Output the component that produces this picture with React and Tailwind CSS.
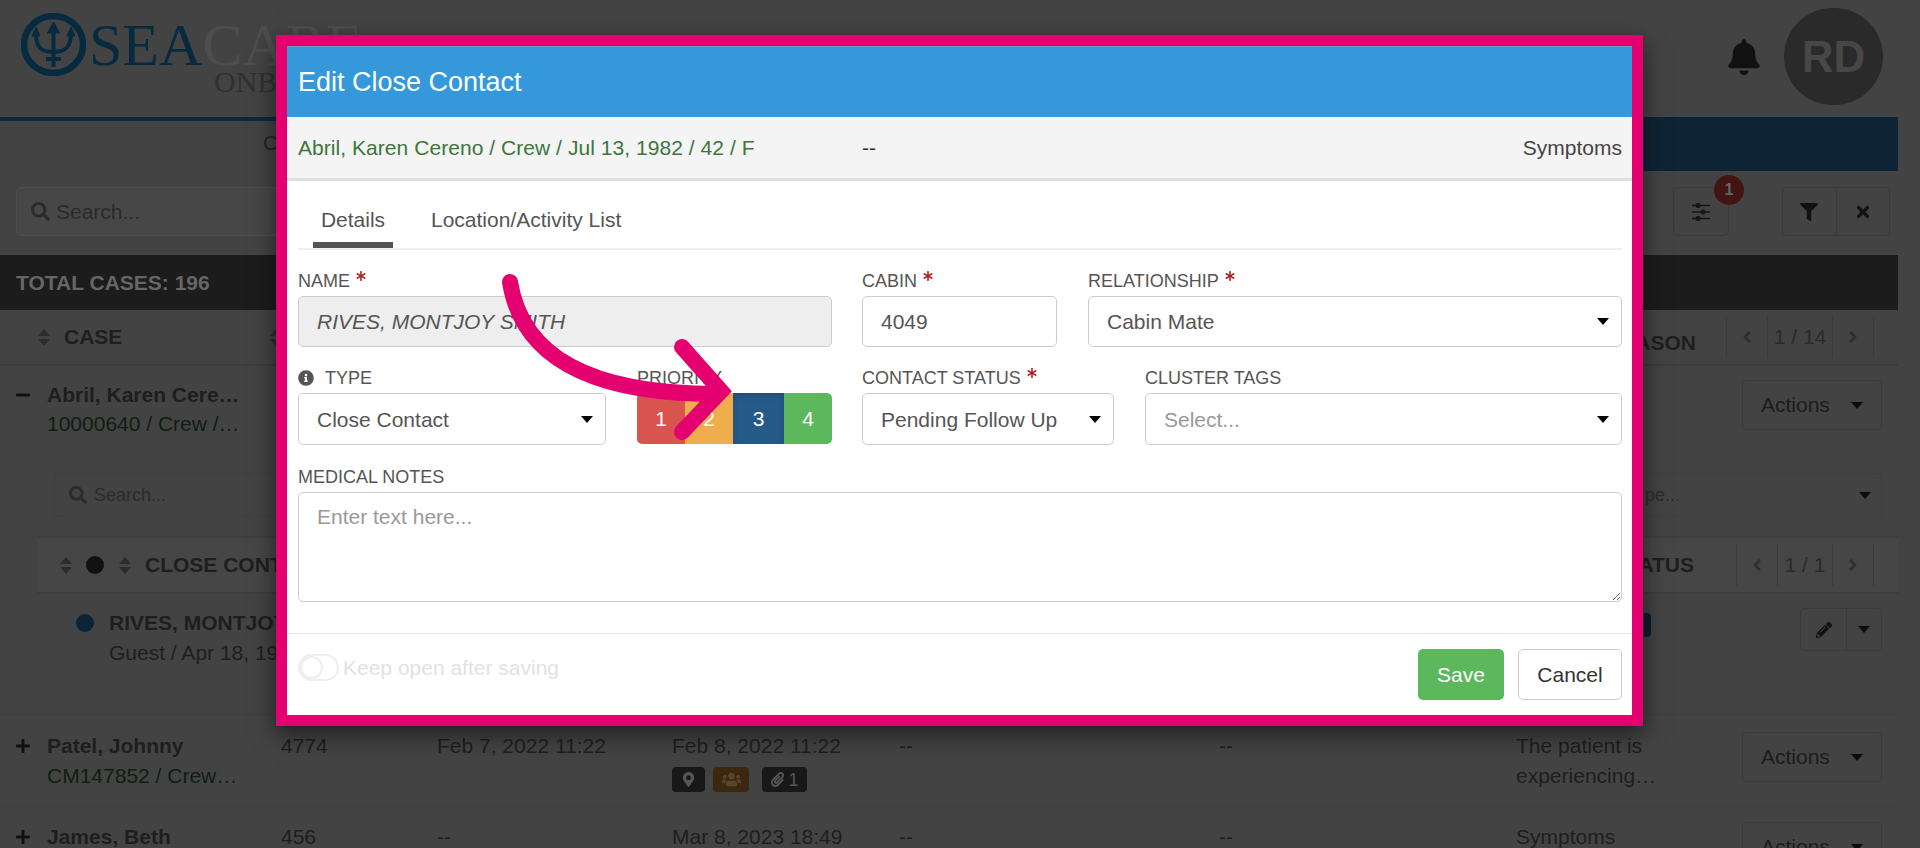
import {
  FaAngleLeft,
  FaAngleRight,
  FaAsterisk,
  FaBell,
  FaFilter,
  FaInfoCircle,
  FaMapMarkerAlt,
  FaMinus,
  FaPaperclip,
  FaPencilAlt,
  FaPlus,
  FaSearch,
  FaTimes,
  FaUsers,
} from "react-icons/fa";

const Caret = ({ dim }) => (
  <span
    className={`h-0 w-0 border-x-[6px] border-t-[7px] border-x-transparent ${
      dim ? "border-t-[#0c0c0c]" : "border-t-black"
    }`}
  />
);

const SortIcon = () => (
  <span className="flex w-3 flex-col gap-[3px]">
    <span className="h-0 w-0 border-x-[6px] border-b-[7px] border-x-transparent border-b-[#2c2c2c]" />
    <span className="h-0 w-0 border-x-[6px] border-t-[7px] border-x-transparent border-t-[#2c2c2c]" />
  </span>
);

const Logo = () => (
  <svg width="65" height="63" viewBox="0 0 65 63" fill="none" stroke="#062a40">
    <ellipse cx="32.5" cy="31.5" rx="29.5" ry="28.5" strokeWidth="6.500" />
    <path d="M32.500 12v42M25 46h15" strokeWidth="4" />
    <path d="M32.500 9l-6 11h12z" fill="#062a40" strokeWidth="1" />
    <path d="M15 21c0 13 5 18 17 18s18-5 18-18" strokeWidth="4" />
    <path d="M15 14l-4 9h8zM50 14l-4 9h8z" fill="#062a40" strokeWidth="1" />
  </svg>
);

const Sliders = () => (
  <svg width="20" height="20" viewBox="0 0 20 20" stroke="#161616" fill="#161616">
    <path d="M1 3.5h18M1 10h18M1 16.500h18" strokeWidth="1.400" />
    <circle cx="7" cy="3.500" r="2.200" />
    <circle cx="12" cy="10" r="2.200" />
    <circle cx="7" cy="16.500" r="2.200" />
  </svg>
);

const Pager = ({ label, mid }) => (
  <div className={`flex h-[42px] items-center text-[21px] text-[#2a2a2a]`}>
    <span className="flex h-full w-[42px] items-center justify-center border-x border-[#3b3b3b] text-[#2e2e2e]">
      <FaAngleLeft size={18} />
    </span>
    <span className={`flex h-full items-center justify-center ${mid}`}>{label}</span>
    <span className="flex h-full w-[42px] items-center justify-center border-x border-[#3b3b3b] text-[#2e2e2e]">
      <FaAngleRight size={18} />
    </span>
  </div>
);

const ActionsButton = () => (
  <div className="flex h-[50px] w-[140px] items-center justify-between rounded-[5px] border border-[#3a3a3a] pl-[18px] pr-[18px] text-[21px] text-[#1c1c1c]">
    Actions
    <Caret dim />
  </div>
);

const Required = () => <FaAsterisk size={10} className="ml-[6px] mt-[2px] text-[#b01e1e]" />;

const Field = ({ label, required, icon, className, children }) => (
  <div className={className}>
    <div className="mb-[3px] flex h-[25px] items-start pt-[1px] text-[18px] leading-[24px] text-[#555]">
      {icon}
      {label}
      {required && <Required />}
    </div>
    {children}
  </div>
);

const SelectBox = ({ value, placeholder, tall }) => (
  <div
    className={`flex items-center justify-between rounded-[5px] border border-[#ccc] bg-white pl-[18px] pr-[12px] text-[21px] ${
      tall ? "h-[52px] pt-[1px]" : "h-[51px]"
    }`}
  >
    <span className={placeholder ? "text-[#999]" : "text-[#555]"}>{value}</span>
    <Caret />
  </div>
);

const priorities = [
  { n: 1, cls: "w-[48px] rounded-l-[5px] bg-[#d9534f]" },
  { n: 2, cls: "w-[48px] bg-[#f0ad4e]" },
  { n: 3, cls: "w-[51px] bg-[#265a88] shadow-[inset_0_3px_6px_rgba(0,0,0,0.15)]" },
  { n: 4, cls: "w-[48px] rounded-r-[5px] bg-[#5cb85c]" },
];

const EditCloseContact = () => (
  <div className="absolute left-[276px] top-[35px] w-[1367px] border-[11px] border-[#e4006e] bg-white shadow-[0_8px_22px_rgba(0,0,0,0.55)]">
    <div className="flex h-[71px] items-center border-t border-[#6f9fc0] bg-[#3498db] pl-[11px] text-[27px] text-white">
      Edit Close Contact
    </div>
    <div className="flex h-[64px] items-center border-b-[3px] border-[#ddd] bg-[#f4f4f4] pl-[11px] pr-[10px] text-[21px]">
      <span className="w-[564px] tracking-[0.05px] text-[#3c763d]">Abril, Karen Cereno / Crew / Jul 13, 1982 / 42 / F</span>
      <span className="text-[#333]">--</span>
      <span className="ml-auto text-[#444]">Symptoms</span>
    </div>

    <div className="pl-[11px] pr-[10px]">
      <div className="flex h-[69px] border-b-2 border-[#eee] pl-[15px] text-[21px] text-[#555]">
        <div className="w-[80px] border-b-[6px] border-[#555] pt-[24px] text-center leading-[30px]">Details</div>
        <div className="ml-[38px] pt-[24px] leading-[30px]">Location/Activity List</div>
      </div>

      <div className="flex pt-[18px]">
        <Field label="NAME" required className="w-[534px]">
          <input
            readOnly
            value="RIVES, MONTJOY SMITH"
            className="h-[51px] w-full rounded-[5px] border border-[#ccc] bg-[#eee] px-[18px] text-[21px] italic text-[#555] outline-none"
          />
        </Field>
        <Field label="CABIN" required className="ml-[30px] w-[195px]">
          <input
            readOnly
            value="4049"
            className="h-[51px] w-full rounded-[5px] border border-[#ccc] bg-white px-[18px] text-[21px] text-[#555] outline-none"
          />
        </Field>
        <Field label="RELATIONSHIP" required className="ml-[31px] w-[534px]">
          <SelectBox value="Cabin Mate" />
        </Field>
      </div>

      <div className="mt-[18px] flex">
        <Field
          label="TYPE"
          icon={<FaInfoCircle size={16} className="mr-[11px] mt-[4px] text-[#555]" />}
          className="w-[308px]"
        >
          <SelectBox value="Close Contact" tall />
        </Field>
        <Field label="PRIORITY" className="ml-[31px] w-[195px]">
          <div className="flex h-[51px] text-[21px] text-white">
            {priorities.map((p) => (
              <span key={p.n} className={`flex items-center justify-center ${p.cls}`}>
                {p.n}
              </span>
            ))}
          </div>
        </Field>
        <Field label="CONTACT STATUS" required className="ml-[30px] w-[252px]">
          <SelectBox value="Pending Follow Up" tall />
        </Field>
        <Field label="CLUSTER TAGS" className="ml-[31px] w-[477px]">
          <SelectBox value="Select..." placeholder tall />
        </Field>
      </div>

      <Field label="MEDICAL NOTES" className="mt-[19px]">
        <textarea
          placeholder="Enter text here..."
          className="block h-[110px] w-full rounded-[5px] border border-[#ccc] px-[18px] py-[8px] text-[21px] text-[#555] outline-none placeholder:text-[#999]"
        />
      </Field>
    </div>

    <div className="mt-[31px] flex h-[82px] items-center justify-between border-t border-[#e5e5e5] pl-[11px] pr-[10px]">
      <div className="mb-[14px] flex items-center text-[21px] text-[#e2e2e2]">
        <span className="mr-[4px] h-[27px] w-[41px] rounded-full border-2 border-[#eee]">
          <span className="block h-[23px] w-[23px] rounded-full border-2 border-[#eee] bg-white" />
        </span>
        Keep open after saving
      </div>
      <div className="flex gap-[14px] text-[21px]">
        <button className="h-[51px] w-[86px] rounded-[5px] bg-[#5cb85c] text-white">Save</button>
        <button className="h-[51px] w-[104px] rounded-[5px] border border-[#ccc] bg-white text-[#333]">Cancel</button>
      </div>
    </div>
  </div>
);

const Background = () => (
  <div className="w-[1898px] text-[21px] text-[#1e1e1e]">
    <header className="relative h-[117px] pl-[21px] pt-[13px]">
      <div className="flex items-start">
        <Logo />
        <div className="ml-[3px] font-['Liberation_Serif',serif]">
          <div className="mt-[2px] text-[60px] leading-[60px]">
            <span className="text-[#062a40]">SEA</span>
            <span className="text-[#4e4e4e]">CARE</span>
          </div>
          <div className="-mt-[8px] ml-[125px] text-[30px] leading-[30px] text-[#303030]">ONB</div>
        </div>
      </div>
      <div className="absolute right-[15px] top-[8px] flex items-center">
        <FaBell size={36} className="mr-[22px] text-[#111]" />
        <div className="flex h-[97px] w-[99px] items-center justify-center rounded-full bg-[#2a2a2a] text-[44px] font-bold text-[#474747]">
          RD
        </div>
      </div>
    </header>

    <nav className="flex h-[54px] bg-[#0e2434]">
      <div className="w-[800px] border-t-4 border-[#0a2a40] bg-[#434343] pl-[263px] pt-[6px] text-[#222]">C</div>
    </nav>

    <div className="flex h-[84px] items-start pl-[16px] pt-[16px]">
      <div className="flex h-[49px] w-[400px] items-center rounded-[5px] border border-[#4f4f4f] bg-[#474747] pl-[14px] text-[#2b2b2b]">
        <FaSearch size={19} className="mr-[6px]" />
        Search...
      </div>
      <div className="relative ml-auto flex h-[49px] w-[56px] items-center justify-center rounded-[5px] border border-[#3a3a3a]">
        <Sliders />
        <span className="absolute -right-[16px] -top-[13px] flex h-[30px] w-[30px] items-center justify-center rounded-full bg-[#421414] text-[16px] font-bold text-[#666]">
          1
        </span>
      </div>
      <div className="ml-[53px] mr-[8px] flex h-[49px] w-[108px] rounded-[5px] border border-[#3a3a3a] text-[#111]">
        <span className="flex flex-1 items-center justify-center border-r border-[#3a3a3a]">
          <FaFilter size={18} />
        </span>
        <span className="flex flex-1 items-center justify-center">
          <FaTimes size={18} />
        </span>
      </div>
    </div>

    <div className="flex h-[55px] items-center bg-[#1c1c1c] pl-[16px] font-bold text-[#666]">TOTAL CASES: 196</div>

    <div className="flex h-[56px] border-b-2 border-[#3d3d3d] pr-[24px] font-bold">
      <div className="flex w-[270px] items-center pl-[38px]">
        <SortIcon />
        <span className="ml-[14px]">CASE</span>
      </div>
      <div className="flex items-center">
        <SortIcon />
      </div>
      <div className="ml-auto flex items-end pb-[6px] pr-[30px]">ASON</div>
      <div className="pt-[6px] font-normal">
        <Pager label="1 / 14" mid="w-[64px]" />
      </div>
    </div>

    <div className="grid grid-cols-[47px_1fr_140px] pr-[16px] pt-[14px]">
      <FaMinus size={16} className="ml-[15px] mt-[7px] text-[#111]" />
      <div className="leading-[30px]">
        <div className="font-bold">Abril, Karen Cere…</div>
        <div className="-mt-[1px] text-[#101e14]">10000640 / Crew /…</div>
      </div>
      <ActionsButton />
    </div>

    <div className="ml-[38px] mt-[18px]">
      <div className="flex h-[79px] items-start justify-between pl-[16px] pr-[16px] pt-[16px] text-[18px] text-[#2b2b2b]">
        <div className="flex h-[44px] w-[300px] items-center rounded-[5px] border border-[#3f3f3f] pl-[14px]">
          <FaSearch size={18} className="mr-[7px]" />
          Search...
        </div>
        <div className="flex h-[44px] w-[300px] items-center justify-between rounded-[5px] border border-[#3f3f3f] pl-[62px] pr-[10px]">
          pe...
          <Caret dim />
        </div>
      </div>

      <div className="flex h-[58px] items-center border-y-2 border-[#3e3e3e] bg-[#464646] pl-[22px] pr-[24px] font-bold">
        <SortIcon />
        <span className="ml-[14px] h-[18px] w-[18px] rounded-full bg-[#111]" />
        <span className="ml-[15px]">
          <SortIcon />
        </span>
        <span className="ml-[14px]">CLOSE CONT</span>
        <span className="ml-auto pr-[42px]">ATUS</span>
        <div className="font-normal">
          <Pager label="1 / 1" mid="w-[54px]" />
        </div>
      </div>

      <div className="flex h-[120px] items-start pl-[38px] pr-[16px] pt-[14px] leading-[30px]">
        <span className="mt-[6px] h-[18px] w-[18px] rounded-full bg-[#0c2438]" />
        <div className="ml-[15px]">
          <div className="font-bold">RIVES, MONTJOY</div>
          <div>Guest / Apr 18, 19</div>
        </div>
        <span className="ml-auto mt-[5px] h-[24px] w-[40px] rounded-r-[4px] bg-[#0b2030]" />
        <div className="ml-[149px] flex h-[43px] w-[82px] rounded-[5px] border border-[#3a3a3a] text-[#111]">
          <span className="flex w-[46px] items-center justify-center border-r border-[#3a3a3a]">
            <FaPencilAlt size={16} />
          </span>
          <span className="flex flex-1 items-center justify-center">
            <Caret dim />
          </span>
        </div>
      </div>
    </div>

    <div className="grid h-[92px] grid-cols-[47px_234px_156px_235px_227px_320px_297px_226px_140px] border-t border-[#3f3f3f] pt-[16px] leading-[30px]">
      <FaPlus size={16} className="ml-[15px] mt-[7px] text-[#111]" />
      <div>
        <div className="font-bold">Patel, Johnny</div>
        <div className="text-[#101e14]">CM147852 / Crew…</div>
      </div>
      <div>4774</div>
      <div>Feb 7, 2022 11:22</div>
      <div>
        Feb 8, 2022 11:22
        <div className="mt-[6px] flex h-[25px] text-[#555]">
          <span className="flex w-[33px] items-center justify-center rounded-[4px] bg-[#181818]">
            <FaMapMarkerAlt size={15} />
          </span>
          <span className="ml-[8px] flex w-[36px] items-center justify-center rounded-[4px] bg-[#3c2810] text-[#5a4528]">
            <FaUsers size={19} />
          </span>
          <span className="ml-[13px] flex w-[45px] items-center justify-center gap-[3px] rounded-[4px] bg-[#181818] text-[18px]">
            <FaPaperclip size={15} />1
          </span>
        </div>
      </div>
      <div>--</div>
      <div>--</div>
      <div>
        The patient is
        <br />
        experiencing…
      </div>
      <div className="mt-[1px]">
        <ActionsButton />
      </div>
    </div>

    <div className="grid grid-cols-[47px_234px_156px_235px_227px_320px_297px_226px_140px] border-t border-[#3f3f3f] pt-[15px] leading-[30px]">
      <FaPlus size={16} className="ml-[15px] mt-[7px] text-[#111]" />
      <div className="font-bold">James, Beth</div>
      <div>456</div>
      <div>--</div>
      <div>Mar 8, 2023 18:49</div>
      <div>--</div>
      <div>--</div>
      <div>Symptoms</div>
      <ActionsButton />
    </div>
  </div>
);

export default function App() {
  return (
    <div className="relative h-[848px] overflow-hidden bg-[#434343] font-['Liberation_Sans',Arial,sans-serif]">
      <Background />
      <EditCloseContact />
      {/* tutorial arrow pointing at the priority buttons */}
      <svg className="absolute left-0 top-0" width="1920" height="848" fill="none" stroke="#e4006e" strokeWidth="16" strokeLinecap="round">
        <path d="M510 282C522 357 590 394 716 394" />
        <path d="M682 347L721 391L682 432" strokeLinejoin="miter" />
      </svg>
    </div>
  );
}
